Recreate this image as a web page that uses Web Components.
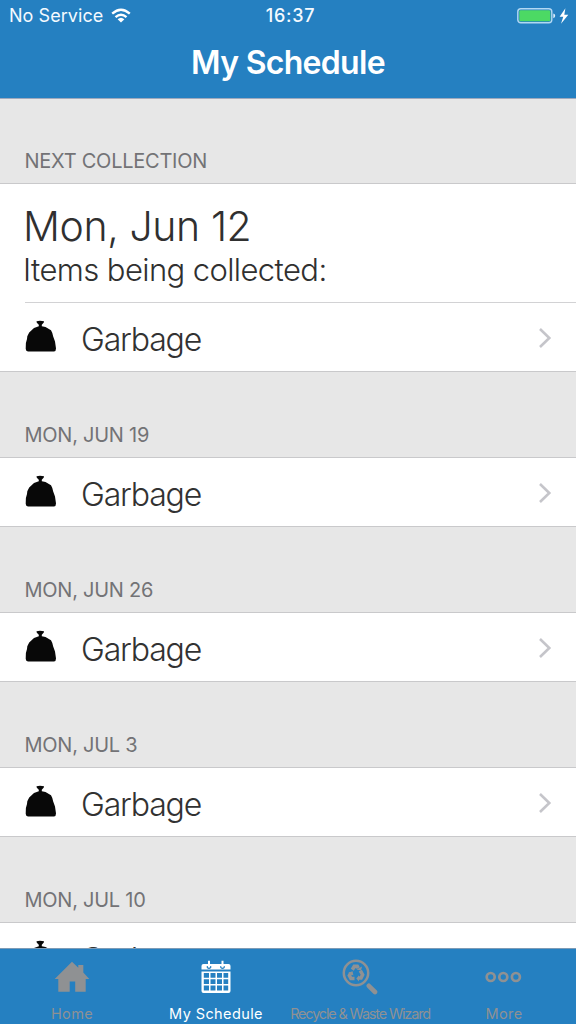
<!DOCTYPE html>
<html lang="en">
<head>
<meta charset="utf-8">
<title>My Schedule</title>
<style>
html,body{margin:0;height:100%;overflow:hidden}
body{font-family:Inter,"Liberation Sans",sans-serif;background:#fff}
</style>
</head>
<body>
<schedule-app></schedule-app>
<script>
const define = (name, html) => {
  const t = document.createElement('template');
  t.innerHTML = html;
  customElements.define(name, class extends HTMLElement {
    constructor() {
      super();
      this.attachShadow({ mode: 'open' }).append(t.content.cloneNode(true));
    }
  });
};

define('status-bar', `<style>
:host{display:grid;grid-template-columns:1fr auto 1fr;align-items:center;height:32px;line-height:32px;color:#f4faff;font-size:18px;white-space:nowrap}
.l,.r{display:flex;align-items:center}
.l{padding-left:9px;letter-spacing:.05px}
.l svg{margin-left:8px}
.t{font-weight:500;font-size:18px;letter-spacing:.7px;padding-left:5px}
.r{justify-content:flex-end;padding-right:7px}
</style>
<div class="l"><span>No Service</span><svg width="20" height="16" viewBox="0 0 20 16"><g fill="none" stroke="#fff" stroke-width="2.4"><path d="M1.2 5.6Q10-2.2 18.8 5.6"/><path d="M4.5 9.1Q10 4.3 15.5 9.1"/></g><path d="M6.6 11.2Q10 8.2 13.4 11.2L10 14.6Z" fill="#fff"/></svg></div>
<div class="t">16:37</div>
<div class="r"><svg width="52" height="18" viewBox="0 0 52 18"><rect x=".8" y="1.8" width="34" height="14" rx="3" fill="none" stroke="#b3d8f3" stroke-width="1.4"/><rect x="2.3" y="3.3" width="31" height="11" rx="1.4" fill="#4cd964"/><path d="M36.3 6.4q1.9.4 1.9 2.4t-1.9 2.4z" fill="#dceefa"/><path d="M48.4 1.2L42.6 9.8h3.7l-2.3 6.900 7.300-9h-4z" fill="#fff"/></svg></div>`);

define('nav-header', `<style>
:host{display:block;background:#2580c1;border-bottom:1px solid #9fa9bd;box-sizing:border-box;height:99px;flex:none}
h1{margin:0;font-size:32px;line-height:40px;padding-top:11px;text-align:center;color:#fff;font-weight:600;letter-spacing:-.7px}
</style><status-bar></status-bar><h1><slot></slot></h1>`);

define('section-title', `<style>
:host{display:flex;align-items:flex-end;box-sizing:border-box;height:86px;background:#e7e7e7;border-bottom:1px solid #c9c9cb;padding:0 24.500px 10px;line-height:24px;font-size:20px;color:#737376;white-space:nowrap;letter-spacing:-.25px}
:host([first]){height:85px}
</style><slot></slot>`);

define('bag-icon', `<style>:host{display:block;width:32px;height:33px}svg{display:block}</style>
<svg width="32" height="33" viewBox="0 0 32 33"><path fill="#080808" d="M11.500 1.200L15 .8 19 1.200 18.800 2.500 16.800 4.800V6.200L20.500 6.900 26 10.200 27.300 13 28.200 16.500 30 21.500 31 28.500Q31 31.300 29 31.500H3Q.8 31.300.7 28.700L.9 23 2 19 2.300 16.200 4.200 12.500 9 8 13.800 6.200V4.800L11.800 2.800Z"/></svg>`);

define('waste-row', `<style>
:host{display:flex;align-items:center;box-sizing:border-box;height:69px;background:#fff;border-bottom:1px solid #c9c9cb;padding:0 24px 0 25px}
.n{margin-left:24px;margin-top:5px;flex:1;font-size:32px;line-height:40px;font-weight:300;color:#323232;letter-spacing:-1.150px}
svg{display:block;margin-top:1px}
bag-icon{margin-top:-2px}
</style><bag-icon></bag-icon><span class="n"><slot></slot></span>
<svg width="14" height="22" viewBox="0 0 14 22"><path d="M2 2l9.300 9L2 20" fill="none" stroke="#c5c5ca" stroke-width="2.600"/></svg>`);

define('next-date', `<style>
:host{display:block;box-sizing:border-box;height:119px;background:#fff;padding:16px 0 0 23px;font-weight:300;color:#303030;white-space:nowrap}
.d{font-size:41px;line-height:52px;letter-spacing:-.4px}
.s{font-size:31px;line-height:36px;letter-spacing:-.6px}
.line{height:1px;background:#d2d2d4;margin:14px 0 0 2px}
</style><div class="d"><slot name="date"></slot></div><div class="s"><slot></slot></div><div class="line"></div>`);

define('tab-item', `<style>
:host{display:flex;flex-direction:column;align-items:center;color:#8f9193;font-size:14.500px;white-space:nowrap;letter-spacing:var(--track,.4px);width:144px;box-sizing:border-box}
:host([active]){color:#fff}
.i{height:55px;display:flex;align-items:center;justify-content:center}
.t{line-height:20px}
::slotted(svg){display:block}
</style><div class="i"><slot name="icon"></slot></div><div class="t"><slot></slot></div>`);

define('tab-bar', `<style>
:host{display:flex;height:76px;flex:none;background:#2580c1;box-sizing:border-box;border-top:1px solid #7d9bb6}
</style><slot></slot>`);

define('schedule-app', `<style>
:host{display:flex;flex-direction:column;width:576px;height:1024px;overflow:hidden}
main{flex:1;min-height:0;overflow:hidden;background:#fff}
</style>
<nav-header>My Schedule</nav-header>
<main>
<section-title first>NEXT COLLECTION</section-title>
<next-date><span slot="date">Mon, Jun 12</span>Items being collected:</next-date>
<waste-row>Garbage</waste-row>
<section-title>MON, JUN 19</section-title><waste-row>Garbage</waste-row>
<section-title>MON, JUN 26</section-title><waste-row>Garbage</waste-row>
<section-title>MON, JUL 3</section-title><waste-row>Garbage</waste-row>
<section-title>MON, JUL 10</section-title><waste-row>Garbage</waste-row>
</main>
<tab-bar>
<tab-item>Home<svg slot="icon" width="36" height="32" viewBox="0 0 36 32" fill="#8f9193"><path d="M18 .7L24.300 6.800V4h5v7.400L35.300 18H31.700V30.700H21.200V20.500H15.700V30.700H4.300V18H.7Z"/></svg></tab-item>
<tab-item active>My Schedule<svg slot="icon" width="30" height="34" viewBox="0 0 30 34"><path d="M2.500 4H27.500Q29.500 4 29.500 6V9.500H.5V6Q.5 4 2.500 4Z" fill="#fff"/><path fill="#fff" fill-rule="evenodd" d="M.5 11.500H29.500V31Q29.500 33 27.500 33H2.500Q.5 33 .5 31ZM2.800 13v4.800h5.200V13zm6.700 0v4.800h5V13zm6.500 0v4.800h5V13zm6.500 0v4.800h4.700V13zM2.800 19.300v4.800h5.200v-4.800zm6.700 0v4.800h5v-4.800zm6.500 0v4.800h5v-4.800zm6.500 0v4.800h4.700v-4.800zM2.800 25.600v4.900h5.200v-4.900zm6.700 0v4.900h5v-4.900zm6.500 0v4.900h5v-4.900zm6.500 0v4.900h4.700v-4.900z"/><path d="M6.300 6v1.500q1.700 1.600 3.400 0V6M19.800 6v1.500q1.700 1.600 3.400 0V6" fill="none" stroke="#2580c1" stroke-width="1.100"/><path d="M8 .8V6.500M21.500 .8V6.500" stroke="#fff" stroke-width="2"/></svg></tab-item>
<tab-item style="--track:-1.180px">Recycle &amp; Waste Wizard<svg slot="icon" width="36" height="36" viewBox="0 0 36 36" fill="none" stroke="#8f9193"><circle cx="14" cy="14" r="12.200" stroke-width="2.500"/><path d="M26.800 26.800l6.200 6.200" stroke-width="4.600" stroke-linecap="round"/><g stroke-width="3.600"><path d="M10.300 10.700l2-3.300h3l1 1.700"/><path d="M18.300 11.700l2.300 4-1.600 3.300h-2.500"/><path d="M12.500 19.500H9l-1.600-3 1.500-2.700"/></g><path fill="#8f9193" stroke="none" d="M14.500 10.500l4.500 1.100 1-4.200zM17 16.300l-2.700 3.200 2.700 3zM6.300 13.800l4.300-1.600.8 4.300z"/></svg></tab-item>
<tab-item>More<svg slot="icon" width="38" height="12" viewBox="0 0 38 12" fill="none" stroke="#8f9193" stroke-width="2.700"><circle cx="5.700" cy="6" r="4"/><circle cx="18.300" cy="6" r="4"/><circle cx="30.900" cy="6" r="4"/></svg></tab-item>
</tab-bar>`);
</script>
</body>
</html>
